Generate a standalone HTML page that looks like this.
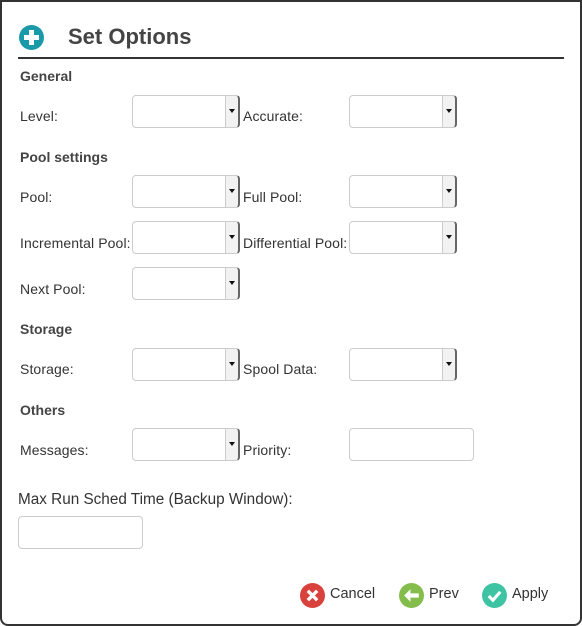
<!DOCTYPE html><html><head><style>
body{margin:0;width:582px;height:626px;background:#fff;font-family:"Liberation Sans",sans-serif;color:#333;position:relative;overflow:hidden}
.frame{position:absolute;left:0;top:0;width:578px;height:622px;border:2px solid #333;border-radius:0 0 8px 8px;border-top-width:2px}
.a{position:absolute}
.h{font-weight:bold;font-size:14px;color:#444}
.l{font-size:14px;color:#333;letter-spacing:0.1px}
.s{position:absolute;width:106px;height:31px;border:1px solid #ccc;border-radius:4px;background:#fff;box-sizing:content-box}
.s .b{position:absolute;right:-1px;top:-1px;width:12px;height:31px;background:#f2f2f2;border-left:1px solid #ccc;border-right:2px solid #666;border-radius:0 4px 4px 0;border-top:1px solid #ccc;border-bottom:1px solid #ccc}
.s .b:after{content:"";position:absolute;left:3px;top:13px;border-left:3px solid transparent;border-right:3px solid transparent;border-top:4px solid #111}
.i{position:absolute;width:123px;height:31px;border:1px solid #ccc;border-radius:4px}
.btn{position:absolute;top:583px;font-size:14.5px;color:#333}
</style></head><body>
<div class="frame"></div>
<svg class="a" style="left:19px;top:25px" width="25" height="25" viewBox="0 0 25 25"><circle cx="12.5" cy="12.5" r="12.5" fill="#1a9aa8"/><path d="M10 5h5v5h5v5h-5v5h-5v-5h-5v-5h5z" fill="#fff"/></svg>
<div class="a" style="left:68px;top:24px;font-size:22px;font-weight:bold;color:#444">Set Options</div>
<div class="a" style="left:18px;top:57px;width:546px;height:2px;background:#333"></div>
<div class="a h" style="left:20px;top:68px">General</div>
<div class="a l" style="left:20px;top:108px">Level:</div>
<div class="s" style="left:132px;top:95px"><div class="b"></div></div>
<div class="a l" style="left:243px;top:108px">Accurate:</div>
<div class="s" style="left:349px;top:95px"><div class="b"></div></div>
<div class="a h" style="left:20px;top:149px">Pool settings</div>
<div class="a l" style="left:20px;top:189px">Pool:</div>
<div class="s" style="left:132px;top:175px"><div class="b"></div></div>
<div class="a l" style="left:243px;top:189px">Full Pool:</div>
<div class="s" style="left:349px;top:175px"><div class="b"></div></div>
<div class="a l" style="left:20px;top:235px">Incremental Pool:</div>
<div class="s" style="left:132px;top:221px"><div class="b"></div></div>
<div class="a l" style="left:243px;top:235px">Differential Pool:</div>
<div class="s" style="left:349px;top:221px"><div class="b"></div></div>
<div class="a l" style="left:20px;top:281px">Next Pool:</div>
<div class="s" style="left:132px;top:267px"><div class="b"></div></div>
<div class="a h" style="left:20px;top:321px">Storage</div>
<div class="a l" style="left:20px;top:361px">Storage:</div>
<div class="s" style="left:132px;top:348px"><div class="b"></div></div>
<div class="a l" style="left:243px;top:361px">Spool Data:</div>
<div class="s" style="left:349px;top:348px"><div class="b"></div></div>
<div class="a h" style="left:20px;top:402px">Others</div>
<div class="a l" style="left:20px;top:442px">Messages:</div>
<div class="s" style="left:132px;top:428px"><div class="b"></div></div>
<div class="a l" style="left:243px;top:442px">Priority:</div>
<div class="i" style="left:349px;top:428px"></div>
<div class="a" style="left:18px;top:491px;font-size:15.3px;color:#333">Max Run Sched Time (Backup Window):</div>
<div class="i" style="left:18px;top:516px"></div>
<svg class="a" style="left:300px;top:583px" width="25" height="25" viewBox="0 0 24 24"><circle cx="12" cy="12" r="12" fill="#d9423c"/><path d="M7.5 7.5l9 9M16.5 7.5l-9 9" stroke="#fff" stroke-width="3.2"/></svg>
<div class="btn" style="left:330px;top:586px">Cancel</div>
<svg class="a" style="left:399px;top:583px" width="25" height="25" viewBox="0 0 24 24"><circle cx="12" cy="12" r="12" fill="#84bd4c"/><path d="M5 12l6-6v4h8v4h-8v4z" fill="#fff"/></svg>
<div class="btn" style="left:429px;top:586px">Prev</div>
<svg class="a" style="left:482px;top:583px" width="25" height="25" viewBox="0 0 24 24"><circle cx="12" cy="12" r="12" fill="#3ec4a3"/><path d="M6.5 12.5l4 4 7-8" stroke="#fff" stroke-width="3" fill="none"/></svg>
<div class="btn" style="left:512px;top:586px">Apply</div>
</body></html>
